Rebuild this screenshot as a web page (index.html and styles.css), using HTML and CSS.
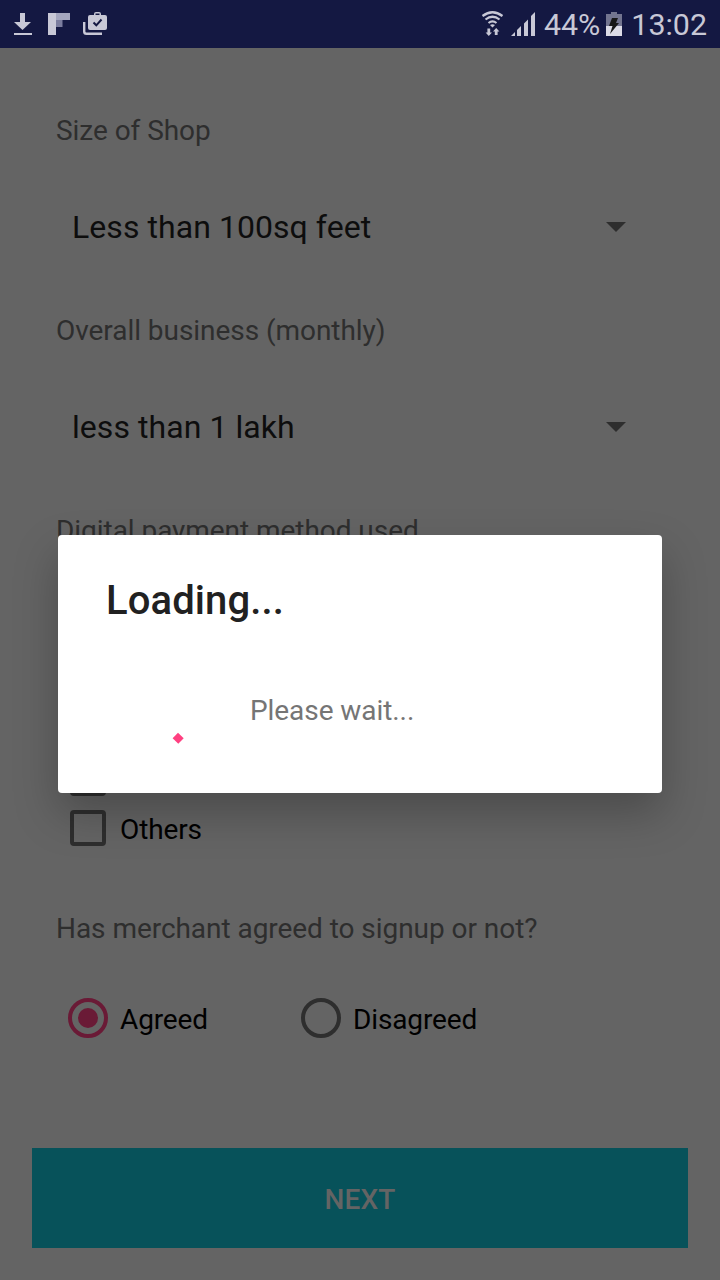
FILE: index.html
```html
<!DOCTYPE html>
<html lang="en">
<head>
<meta charset="utf-8">
<title>Merchant signup</title>
<link rel="stylesheet" href="styles.css">
</head>
<body>
<div class="screen">
  <header class="status">
    <svg class="status-icons" width="120" height="48" viewBox="0 0 120 48">
      <path fill="#c8c8d6" d="M20 13h5v9h6l-8.500 8-8.500-8h6zM14 33h18v2H14z"/>
      <path fill="#c8c8d6" d="M48 13h8v22h-8z"/>
      <path fill="#a4a6be" d="M56 13h14v7H56z"/>
      <path fill="#7b7d9e" d="M56 20h6.500v7H56z"/>
      <path fill="#c8c8d6" fill-rule="evenodd" d="M90 15h4v-1q0-2 2-2h3q2 0 2 2v1h4q2 0 2 2v11q0 2-2 2H90q-2 0-2-2V17q0-2 2-2zM95.500 15h4v-1.500h-4z"/>
      <path fill="none" stroke="#141842" stroke-width="2" d="M93.500 22.500l2.800 2.800 5.200-5.800"/>
      <path fill="none" stroke="#c8c8d6" stroke-width="2.400" d="M84.200 22v9.500q0 2.300 2.300 2.300H102"/>
    </svg>
    <div class="status-right">
      <svg class="signal" width="60" height="48" viewBox="0 0 60 48">
        <g fill="none" stroke="#c8c8d6" stroke-width="2.200">
          <path d="M1.500 16q10-7.500 20 0M4.500 19.500q7-5.500 14 0M7.500 23q4-3.200 8 0"/>
        </g>
        <path fill="#c8c8d6" d="M9 25q2.500-1.500 5 0l-2.500 2.500zM6.400 28.500h2.800v4H11l-3.200 3.500-3.200-3.500h1.800zM13.800 35h2.800v-3.500h1.800L15.200 28 12 31.500h1.800z"/>
        <path fill="#c8c8d6" d="M30 36l4-4v4zM36 30l4-4v10h-4zM43 23.500l4-4V36h-4zM50 16l4-4v24h-4z"/>
      </svg>
      <span class="percent">44%</span>
      <svg class="battery" width="16" height="48" viewBox="0 0 16 48">
        <path fill="#73758f" d="M5 12h6v2h5v12H0V14h5z"/>
        <path fill="#dcdce6" d="M0 26h16v10H0z"/>
        <path fill="#181818" d="M6 18h6l-2 5h3L4 34l2.500-8H3z"/>
      </svg>
      <span class="clock">13:02</span>
    </div>
  </header>
  <main class="form">
    <div class="label">Size of Shop</div>
    <div class="select"><span>Less than 100sq feet</span><i class="caret"></i></div>
    <div class="label">Overall business (monthly)</div>
    <div class="select"><span>less than 1 lakh</span><i class="caret"></i></div>
    <div class="label">Digital payment method used</div>
    <div class="checks">
      <div class="check"><i class="box"></i></div>
      <div class="check"><i class="box"></i><span>Others</span></div>
    </div>
    <div class="label question">Has merchant agreed to signup or not?</div>
    <div class="radios">
      <div class="radio checked"><i class="ring"></i><span>Agreed</span></div>
      <div class="radio"><i class="ring"></i><span>Disagreed</span></div>
    </div>
    <div class="next">NEXT</div>
  </main>
  <section class="dialog">
    <div class="title">Loading...</div>
    <div class="progress">
      <svg class="spinner" width="96" height="96" viewBox="0 0 96 96">
        <path fill="#ff4081" d="M72 70.800l5.700 5.400-5.400 5.500-5.700-5.400z"/>
      </svg>
      <span class="message">Please wait...</span>
    </div>
  </section>
</div>
</body>
</html>
```
FILE: styles.css
```css
body {
  margin: 0;
  font-family: Roboto, sans-serif;
  background: #646464;
}
.screen {
  position: relative;
  width: 720px;
  height: 1280px;
  overflow: hidden;
  background: #646464;
}
.status {
  display: flex;
  justify-content: space-between;
  height: 48px;
  padding-right: 13px;
  background: #141842;
  color: #c8c8d6;
  font-size: 30.4px;
  line-height: 50px;
}
.status svg { display: block; }
.status-right { display: flex; }
.signal { margin-right: 3px; }
.battery { margin: 0 9px 0 6px; }
.form {
  padding: 62px 32px 0;
  font-size: 28px;
  color: #000;
}
.label {
  height: 40px;
  padding-left: 24px;
  line-height: 42px;
  letter-spacing: -.05px;
  color: #2e2e2e;
}
.select {
  display: flex;
  align-items: center;
  justify-content: space-between;
  height: 80px;
  margin: 37px 62px 43px 40px;
  font-size: 32px;
  letter-spacing: .06px;
  color: #0d0d0d;
}
.caret {
  border: solid transparent;
  border-width: 10px 10px 0;
  border-top-color: #2e2e2e;
}
.checks {
  padding: 203px 0 0 38px;
}
.check {
  display: flex;
  align-items: center;
  gap: 14px;
  height: 50px;
}
.check span,
.radio span {
  padding-top: 2px;
  letter-spacing: -.12px;
}
.box {
  box-sizing: border-box;
  width: 36px;
  height: 36px;
  border: 4px solid #2e2e2e;
  border-radius: 4px;
}
.question { margin-top: 55px; }
.radios {
  display: flex;
  gap: 93px;
  height: 40px;
  margin-top: 50px;
  padding-left: 36px;
}
.radio {
  display: flex;
  align-items: center;
  gap: 12px;
}
.ring {
  box-sizing: border-box;
  display: grid;
  place-items: center;
  width: 40px;
  height: 40px;
  border: 4px solid #2e2e2e;
  border-radius: 50%;
}
.checked .ring { border-color: #6a1a36; }
.checked .ring::after {
  content: "";
  width: 20px;
  height: 20px;
  border-radius: 50%;
  background: #6a1a36;
}
.next {
  height: 100px;
  margin-top: 110px;
  background: #07525a;
  color: #646464;
  font-weight: 500;
  line-height: 104px;
  letter-spacing: .1px;
  text-align: center;
}
.dialog {
  position: absolute;
  left: 58px;
  top: 535px;
  box-sizing: border-box;
  width: 604px;
  height: 258px;
  padding: 40px 48px;
  border-radius: 4px;
  background: #fff;
  box-shadow: 0 20px 44px rgba(0, 0, 0, .25);
}
.title {
  height: 50px;
  font-size: 40px;
  font-weight: 500;
  line-height: 52px;
  letter-spacing: .1px;
  color: #212121;
}
.progress {
  display: flex;
  align-items: center;
  gap: 48px;
  margin-top: 37px;
  font-size: 28px;
  letter-spacing: -.07px;
  color: #757575;
}
```
